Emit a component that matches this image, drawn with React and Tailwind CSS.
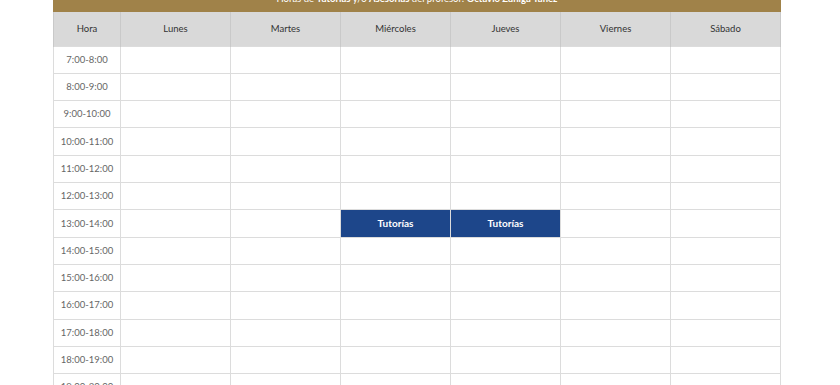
import React from 'react';

const days = ['Lunes', 'Martes', 'Miércoles', 'Jueves', 'Viernes', 'Sábado'];
const hours = [
  '7:00-8:00', '8:00-9:00', '9:00-10:00', '10:00-11:00', '11:00-12:00', '12:00-13:00',
  '13:00-14:00', '14:00-15:00', '15:00-16:00', '16:00-17:00', '17:00-18:00', '18:00-19:00',
  '19:00-20:00',
];

// slots with tutoring: hour index -> day indices
const slots = { 6: [2, 3] };

const App = () => {
  return (
    <div className="bg-white min-h-screen overflow-hidden" style={{ fontFamily: 'Lato, "Open Sans", sans-serif' }}>
      <div className="ml-[53px] w-[728px] -mt-[11px]">
        {/* Title */}
        <div className="bg-[#a08249] h-[23px] pb-[3px] flex items-center justify-center text-[9.5px] text-white">
          <span>
            Horas de <b>Tutorías</b> y/o <b>Asesorías</b> del profesor: <b>Octavio Zúñiga Yáñez</b>
          </span>
        </div>

        {/* Schedule */}
        <table className="w-full border-collapse table-fixed text-[9.5px]">
          <colgroup>
            <col className="w-[67px]" />
            {days.map((d) => (
              <col key={d} className="w-[110px]" />
            ))}
          </colgroup>
          <thead>
            <tr className="bg-[#d9d9d9] h-[34px]">
              <th className="font-normal text-[#333] border-x border-[#c9c9c9]">Hora</th>
              {days.map((d) => (
                <th key={d} className="font-normal text-[#333] border-x border-[#c9c9c9]">
                  {d}
                </th>
              ))}
            </tr>
          </thead>
          <tbody>
            {hours.map((h, i) => (
              <tr key={h} className="h-[27.33px]">
                <td className="text-center text-[#666] border border-[#dcdcdc]">{h}</td>
                {days.map((d, j) =>
                  slots[i]?.includes(j) ? (
                    <td key={d} className="bg-[#1d468a] text-white font-bold text-[10px] text-center border border-[#dcdcdc]">
                      Tutorías
                    </td>
                  ) : (
                    <td key={d} className="border border-[#dcdcdc]" />
                  )
                )}
              </tr>
            ))}
          </tbody>
        </table>
      </div>
    </div>
  );
};

export default App;
